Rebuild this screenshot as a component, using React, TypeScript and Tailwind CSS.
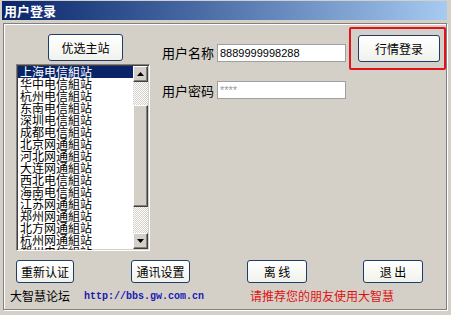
import React from 'react';

const stations = [
  '上海电信組站',
  '华中电信組站',
  '杭州电信組站',
  '东南电信組站',
  '深圳电信組站',
  '成都电信組站',
  '北京网通組站',
  '河北网通組站',
  '大连网通組站',
  '西北电信組站',
  '海南电信組站',
  '江苏网通組站',
  '郑州网通組站',
  '北方网通組站',
  '杭州网通組站',
  '郑州电信組站',
];

const cjk = "font-['SimSun','Noto_Sans_CJK_SC',sans-serif]";

function XpButton({ label, className }: { label: string; className: string }) {
  return (
    <button
      className={`${className} flex items-center justify-center rounded-[3px] border border-[#1c3d6e] bg-gradient-to-b from-white to-[#f2f2ec] text-[12px] text-black ${cjk}`}
    >
      {label}
    </button>
  );
}

function ScrollButton({ up }: { up?: boolean }) {
  return (
    <div className="flex h-[16px] w-[15px] items-center justify-center border border-t-white border-l-white border-r-[#404040] border-b-[#404040] bg-[#d4d0c8] shadow-[inset_-1px_-1px_0_#808080]">
      <svg width="7" height="4" viewBox="0 0 7 4">
        {up ? <path d="M3.5 0 L7 4 L0 4 Z" fill="#000" /> : <path d="M0 0 L7 0 L3.5 4 Z" fill="#000" />}
      </svg>
    </div>
  );
}

function StationList() {
  return (
    <div className="flex h-[187px] w-[134px] border border-t-[#808080] border-l-[#808080] border-r-white border-b-white shadow-[inset_1px_1px_0_#404040,inset_-1px_-1px_0_#d4d0c8] bg-white">
      <div className="flex-1 overflow-hidden pt-[1px] pl-[1px]">
        {stations.map((s, i) => (
          <div
            key={i}
            className={`h-[12px] pl-[2px] text-[12px] leading-[12px] ${cjk} ${
              i === 0 ? 'bg-[#0a246a] text-white' : 'text-black'
            }`}
          >
            {s}
          </div>
        ))}
      </div>
      <div className="mt-[1px] mb-[1px] mr-[1px] flex w-[15px] flex-col">
        <ScrollButton up />
        <div className="h-[23px] bg-[repeating-conic-gradient(#d4d0c8_0_25%,#ffffff_0_50%)] bg-[length:2px_2px]" />
        <div className="h-[102px] border border-t-white border-l-white border-r-[#404040] border-b-[#404040] bg-[#d4d0c8] shadow-[inset_-1px_-1px_0_#808080]" />
        <div className="flex-1 bg-[repeating-conic-gradient(#d4d0c8_0_25%,#ffffff_0_50%)] bg-[length:2px_2px]" />
        <ScrollButton />
      </div>
    </div>
  );
}

function Field({ label, value, muted }: { label: string; value: string; muted?: boolean }) {
  return (
    <div className="flex items-center">
      <div className={`w-[55px] text-[13px] text-black ${cjk}`}>{label}</div>
      <div
        className={`flex h-[18px] w-[129px] items-center border border-[#a0a0a0] bg-white pl-[2px] font-['Liberation_Sans',sans-serif] text-[11px] ${
          muted ? 'text-[#9a9a9a]' : 'text-black'
        }`}
      >
        {value}
      </div>
    </div>
  );
}

export default function App() {
  return (
    <div className="flex h-[315px] w-[451px] flex-col bg-[#d4d0c8] px-[2px] pt-[1px]">
      <div className="flex h-[19px] w-[445px] items-center bg-gradient-to-r from-[#0a246a] to-[#a6caf0] pl-[2px]">
        <span className={`text-[13px] font-bold text-white ${cjk}`}>用户登录</span>
      </div>

      <div className="ml-[1px] mt-[3px] flex h-[287px] w-[444px] flex-col border border-[#808080] shadow-[inset_1px_1px_0_#ffffff,1px_1px_0_#ffffff]">
        <div className="flex pl-[12px]">
          <div className="flex flex-col pt-[10px]">
            <XpButton label="优选主站" className="ml-[32px] h-[27px] w-[75px]" />
            <div className="mt-[3px]">
              <StationList />
            </div>
          </div>

          <div className="ml-[12px] flex flex-col gap-[18px] pt-[19px]">
            <Field label="用户名称" value="8889999998288" />
            <Field label="用户密码" value="****" muted />
          </div>

          <div className="ml-[3px] mt-[3px] h-[43px] w-[97px] rounded-[2px] border-2 border-[#e0141c] pl-[7px] pt-[6px]">
            <XpButton label="行情登录" className="h-[27px] w-[82px]" />
          </div>
        </div>

        <div className="mt-[9px] flex pl-[12px]">
          <XpButton label="重新认证" className="h-[23px] w-[58px]" />
          <XpButton label="通讯设置" className="ml-[57px] h-[23px] w-[59px]" />
          <XpButton label="离 线" className="ml-[57px] h-[23px] w-[60px]" />
          <XpButton label="退 出" className="ml-[56px] h-[23px] w-[60px]" />
        </div>

        <div className="mt-[4px] flex items-center pl-[6px]">
          <span className={`w-[74px] text-[12px] text-black ${cjk}`}>大智慧论坛</span>
          <span className="w-[166px] font-['Liberation_Mono',monospace] text-[10px] font-bold text-[#1a1ab4]">
            http://bbs.gw.com.cn
          </span>
          <span className={`text-[12px] text-[#e01010] ${cjk}`}>请推荐您的朋友使用大智慧</span>
        </div>
      </div>
    </div>
  );
}
